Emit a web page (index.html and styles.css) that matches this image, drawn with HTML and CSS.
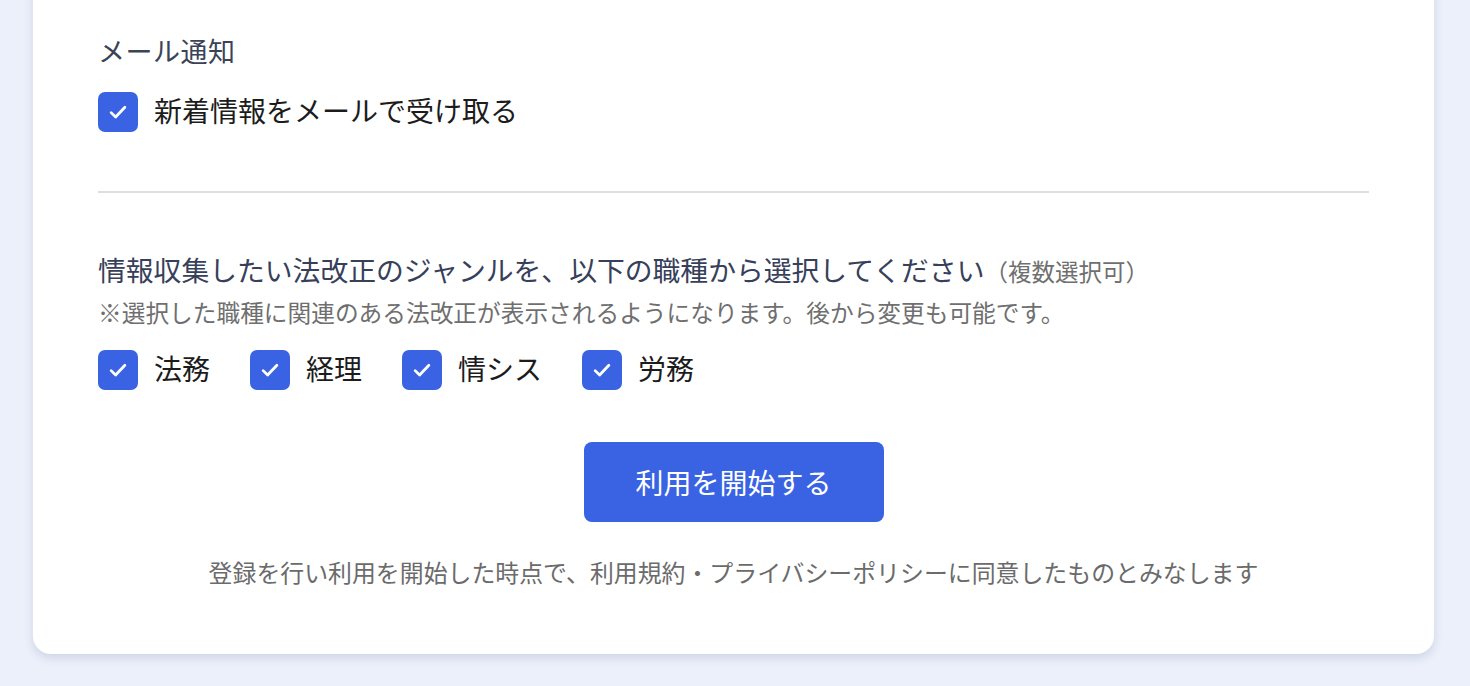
FILE: index.html
```html
<!DOCTYPE html>
<html lang="ja">
<head>
<meta charset="utf-8">
<title>設定</title>
<link rel="stylesheet" href="styles.css">
</head>
<body>
<div class="card">
  <section class="section">
    <div class="label">メール通知</div>
    <label class="check">
      <span class="box"><svg class="tick" viewBox="0 0 24 24"><path d="M6.5 12.5l3.6 3.5 7.4-7.8" fill="none" stroke="#fff" stroke-width="2.2" stroke-linecap="round" stroke-linejoin="round"/></svg></span>
      <span class="check-text">新着情報をメールで受け取る</span>
    </label>
  </section>
  <hr class="divider">
  <section class="section genres">
    <div class="heading">情報収集したい法改正のジャンルを、以下の職種から選択してください<span class="sub">（複数選択可）</span></div>
    <div class="note">※選択した職種に関連のある法改正が表示されるようになります。後から変更も可能です。</div>
    <div class="options">
      <label class="check">
        <span class="box"><svg class="tick" viewBox="0 0 24 24"><path d="M6.5 12.5l3.6 3.5 7.4-7.8" fill="none" stroke="#fff" stroke-width="2.2" stroke-linecap="round" stroke-linejoin="round"/></svg></span>
        <span class="check-text">法務</span>
      </label>
      <label class="check">
        <span class="box"><svg class="tick" viewBox="0 0 24 24"><path d="M6.5 12.5l3.6 3.5 7.4-7.8" fill="none" stroke="#fff" stroke-width="2.2" stroke-linecap="round" stroke-linejoin="round"/></svg></span>
        <span class="check-text">経理</span>
      </label>
      <label class="check">
        <span class="box"><svg class="tick" viewBox="0 0 24 24"><path d="M6.5 12.5l3.6 3.5 7.4-7.8" fill="none" stroke="#fff" stroke-width="2.2" stroke-linecap="round" stroke-linejoin="round"/></svg></span>
        <span class="check-text">情シス</span>
      </label>
      <label class="check">
        <span class="box"><svg class="tick" viewBox="0 0 24 24"><path d="M6.5 12.5l3.6 3.5 7.4-7.8" fill="none" stroke="#fff" stroke-width="2.2" stroke-linecap="round" stroke-linejoin="round"/></svg></span>
        <span class="check-text">労務</span>
      </label>
    </div>
  </section>
  <div class="actions">
    <button class="start">利用を開始する</button>
    <p class="agree">登録を行い利用を開始した時点で、利用規約・プライバシーポリシーに同意したものとみなします</p>
  </div>
</div>
</body>
</html>
```

FILE: styles.css
```css
html, body {
  margin: 0;
  padding: 0;
  background: #ebf0fb;
  font-family: "Noto Sans CJK JP", "Noto Sans", sans-serif;
  height: 686px;
  overflow: hidden;
}
.card {
  margin: -40px 36px 0 33px;
  padding: 69px 65px 66px;
  background: #fff;
  border-radius: 18px;
  box-shadow: 0 4px 10px rgba(60, 70, 110, 0.16);
}
.label {
  font-size: 27px;
  line-height: 44px;
  letter-spacing: 0.5px;
  color: #3b4357;
}
.check {
  display: flex;
  align-items: center;
  gap: 16px;
}
.section .check {
  margin-top: 19px;
}
.box {
  width: 40px;
  height: 40px;
  border-radius: 7px;
  background: #3a63e4;
  display: flex;
  align-items: center;
  justify-content: center;
  flex: none;
}
.tick {
  width: 30px;
  height: 30px;
}
.check-text {
  font-size: 28px;
  line-height: 40px;
  color: #1c1c1c;
  position: relative;
  top: -2px;
}
.divider {
  border: 0;
  border-top: 2px solid #dedede;
  margin: 59px 0 0;
}
.genres {
  padding-top: 55px;
}
.heading {
  font-size: 27.8px;
  line-height: 42px;
  color: #37405a;
}
.sub {
  font-size: 23.5px;
  color: #6f6f6f;
}
.note {
  font-size: 23.7px;
  line-height: 36px;
  color: #6f6f6f;
  margin-top: 2px;
}
.options {
  display: flex;
  gap: 40px;
  margin-top: 20px;
}
.options .check {
  margin-top: 0;
}
.actions {
  display: flex;
  flex-direction: column;
  align-items: center;
  padding-top: 52px;
}
.start {
  width: 300px;
  height: 80px;
  border: 0;
  border-radius: 8px;
  background: #3a63e4;
  color: #fff;
  font-family: inherit;
  font-size: 28px;
}
.agree {
  margin: 34px 0 0;
  font-size: 23.9px;
  line-height: 32px;
  color: #6b6b6b;
}
```
